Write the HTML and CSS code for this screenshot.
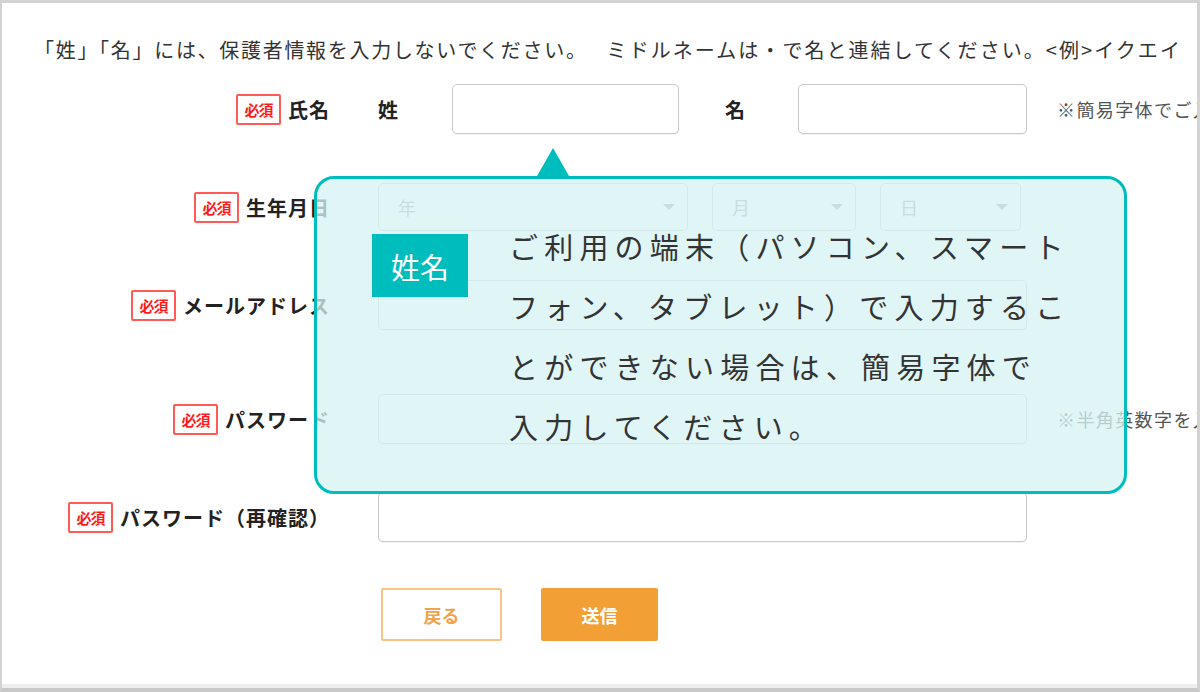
FILE: index.html
```html
<!DOCTYPE html>
<html lang="ja">
<head>
<meta charset="utf-8">
<title>会員登録</title>
<link rel="stylesheet" href="styles.css">
</head>
<body>
<div class="frame">
  <p class="notice"><span>「姓」「名」には、保護者情報を入力しないでください。</span><span class="notice-second">ミドルネームは・で名と連結してください。&lt;例&gt;イクエイ</span></p>

  <form class="form">
    <div class="row">
      <div class="label"><span class="badge">必須</span><span class="label-text">氏名</span></div>
      <div class="fields">
        <span class="sub-label">姓</span>
        <span class="input input-sei"></span>
        <span class="sub-label sub-label-mei">名</span>
        <span class="input input-mei"></span>
        <span class="hint">※簡易字体でご入力ください。</span>
      </div>
    </div>

    <div class="row">
      <div class="label"><span class="badge">必須</span><span class="label-text">生年月日</span></div>
      <div class="fields selects">
        <span class="select select-year"><span class="select-text">年</span><span class="caret"></span></span>
        <span class="select select-month"><span class="select-text">月</span><span class="caret"></span></span>
        <span class="select select-day"><span class="select-text">日</span><span class="caret"></span></span>
      </div>
    </div>

    <div class="row">
      <div class="label"><span class="badge">必須</span><span class="label-text">メールアドレス</span></div>
      <div class="fields">
        <span class="input input-wide"></span>
      </div>
    </div>

    <div class="row row-password">
      <div class="label"><span class="badge">必須</span><span class="label-text">パスワード</span></div>
      <div class="fields">
        <span class="input input-wide"></span>
        <span class="hint">※半角英数字を入力してください。</span>
      </div>
    </div>

    <div class="row">
      <div class="label"><span class="badge">必須</span><span class="label-text">パスワード（再確認）</span></div>
      <div class="fields">
        <span class="input input-wide"></span>
      </div>
    </div>

    <div class="row row-buttons">
      <div></div>
      <div class="buttons">
        <span class="btn btn-back">戻る</span>
        <span class="btn btn-send">送信</span>
      </div>
    </div>
  </form>

  <div class="tooltip">
    <span class="tag">姓名</span>
    <p class="tooltip-text">ご利用の端末（パソコン、スマート<br>フォン、タブレット）で入力するこ<br>とができない場合は、簡易字体で<br>入力してください。</p>
  </div>
</div>
</body>
</html>
```

FILE: styles.css
```css
html, body {
  margin: 0;
  padding: 0;
  background: #ffffff;
}

body {
  font-family: "Noto Sans CJK JP", "Noto Sans", sans-serif;
  color: #333333;
}

.frame {
  position: relative;
  width: 1200px;
  height: 692px;
  box-sizing: border-box;
  border-top: 3px solid #d3d3d3;
  border-left: 2px solid #d3d3d3;
  border-right: 3px solid #d3d3d3;
  border-bottom: 4px solid #c9c9c9;
  box-shadow: inset 0 -4px 0 #eeeeee;
  overflow: hidden;
  background: #ffffff;
}

.notice {
  margin: 0;
  padding: 33px 0 0 32px;
  font-size: 20px;
  line-height: 28px;
  letter-spacing: 1.7px;
  color: #333333;
  white-space: nowrap;
}

.notice-second {
  margin-left: 19px;
  letter-spacing: 2.05px;
}

.form {
  display: flex;
  flex-direction: column;
  gap: 48px;
  margin: 20px 0 0 0;
}

.row {
  display: grid;
  grid-template-columns: 328px auto;
  column-gap: 48px;
  align-items: center;
  height: 50px;
}

.row-password {
  margin-top: 16px;
}

.row-buttons {
  margin-top: -2px;
  height: 53px;
}

.label {
  display: flex;
  justify-content: flex-end;
  align-items: center;
  gap: 7px;
}

.badge {
  display: inline-flex;
  align-items: center;
  justify-content: center;
  box-sizing: border-box;
  width: 45px;
  height: 31px;
  border: 2px solid #ff5a55;
  border-radius: 2px;
  color: #ff1a1a;
  font-size: 15px;
  font-weight: 700;
  letter-spacing: -1px;
  background: #ffffff;
}

.label-text {
  font-size: 20px;
  font-weight: 700;
  letter-spacing: 1px;
  color: #222222;
  white-space: nowrap;
}

.fields {
  display: flex;
  align-items: center;
  white-space: nowrap;
}

.sub-label {
  font-size: 20px;
  font-weight: 700;
  color: #222222;
  width: 20px;
}

.input {
  display: block;
  box-sizing: border-box;
  height: 50px;
  border: 1px solid #c9c9c9;
  border-radius: 5px;
  background: #ffffff;
  box-shadow: 0 1px 1px rgba(0, 0, 0, 0.06);
}

.input-sei {
  width: 227px;
  margin-left: 54px;
}

.sub-label-mei {
  margin-left: 46px;
}

.input-mei {
  width: 229px;
  margin-left: 53px;
}

.input-wide {
  width: 649px;
}

.hint {
  margin-left: 30px;
  font-size: 18px;
  color: #555555;
  letter-spacing: 1.4px;
}

.selects {
  gap: 24px;
}

.select {
  display: flex;
  align-items: center;
  justify-content: space-between;
  box-sizing: border-box;
  height: 48px;
  padding: 0 12px 0 19px;
  border: 1px solid #c9c9c9;
  border-radius: 5px;
  background: #ffffff;
}

.select-year {
  width: 310px;
}

.select-month {
  width: 144px;
}

.select-day {
  width: 141px;
}

.select-text {
  font-size: 18px;
  color: #9a9a9a;
}

.caret {
  width: 0;
  height: 0;
  border-left: 6px solid transparent;
  border-right: 6px solid transparent;
  border-top: 6px solid #9a9a9a;
}

.buttons {
  display: flex;
  gap: 39px;
  margin-left: 3px;
}

.btn {
  display: flex;
  align-items: center;
  justify-content: center;
  box-sizing: border-box;
  height: 53px;
  font-size: 18px;
  font-weight: 700;
  border-radius: 2px;
}

.btn-back {
  width: 121px;
  border: 2px solid #f8c386;
  color: #f3a24a;
  background: #ffffff;
}

.btn-send {
  width: 117px;
  background: #f2a036;
  color: #ffffff;
}

.tooltip {
  position: absolute;
  left: 312px;
  top: 173px;
  width: 813px;
  height: 318px;
  box-sizing: border-box;
  border: 3px solid #00bdbd;
  border-radius: 20px;
  background: rgba(214, 242, 242, 0.76);
  display: flex;
  align-items: flex-start;
  padding: 37px 0 0 55px;
}

.tooltip::before {
  content: "";
  position: absolute;
  top: -31px;
  left: 220px;
  width: 0;
  height: 0;
  border-left: 16px solid transparent;
  border-right: 16px solid transparent;
  border-bottom: 28px solid #00bdbd;
}

.tag {
  display: flex;
  align-items: center;
  justify-content: center;
  width: 96px;
  height: 63px;
  margin-top: 18px;
  background: #00bdbd;
  color: #ffffff;
  font-size: 29px;
  flex-shrink: 0;
}

.tooltip-text {
  margin: 0 0 0 41px;
  font-size: 29px;
  line-height: 60px;
  letter-spacing: 6.2px;
  color: #333333;
  white-space: nowrap;
}
```
